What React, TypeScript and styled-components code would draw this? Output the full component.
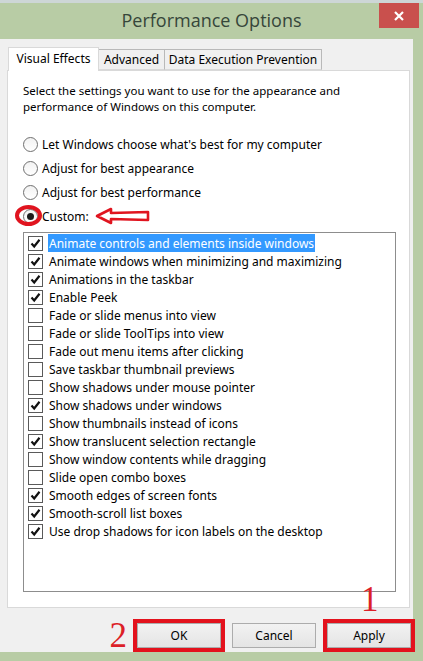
import styled, { createGlobalStyle } from 'styled-components';

const GlobalStyle = createGlobalStyle`
  html, body {
    margin: 0;
    padding: 0;
    background: #b8cca5;
  }
  body {
    font-family: 'Noto Sans', 'Open Sans', sans-serif;
    font-size: 12px;
    color: #000;
  }
`;

const Window = styled.div`
  display: flex;
  flex-direction: column;
  width: 423px;
  height: 661px;
  background: #b8cca5;
  box-sizing: border-box;
  border-top: 3px solid #cdd6d6;
`;

const TitleBar = styled.div`
  display: grid;
  grid-template-columns: 1fr auto 1fr;
  height: 36px;
`;

const Title = styled.div`
  grid-column: 2;
  align-self: center;
  margin-top: -3px;
  font-family: 'Open Sans', 'Noto Sans', sans-serif;
  font-size: 18px;
  font-weight: 400;
  color: #36463a;
`;

const CloseButton = styled.div`
  grid-column: 3;
  justify-self: end;
  align-self: start;
  display: flex;
  align-items: center;
  justify-content: center;
  width: 40px;
  height: 25px;
  margin-right: 4px;
  background: #c9504d;
`;

const Client = styled.div`
  display: flex;
  flex-direction: column;
  height: 613px;
  margin-right: 10px;
  padding: 8px 3px 0 7px;
  box-sizing: border-box;
  background: #f0f0f0;
`;

const TabStrip = styled.div`
  display: flex;
  align-items: flex-end;
  height: 23px;
  margin-left: 1px;
  position: relative;
  z-index: 1;
`;

const Tab = styled.div<{ $active?: boolean; $w: number }>`
  display: flex;
  align-items: center;
  justify-content: center;
  box-sizing: border-box;
  width: ${(p) => p.$w}px;
  height: ${(p) => (p.$active ? 24 : 21)}px;
  margin-bottom: ${(p) => (p.$active ? -1 : 0)}px;
  padding-bottom: ${(p) => (p.$active ? 2 : 0)}px;
  background: ${(p) => (p.$active ? '#fff' : '#f0f0f0')};
  border: 1px solid ${(p) => (p.$active ? '#d9d9d9' : '#b9b9b9')};
  border-bottom: ${(p) => (p.$active ? 'none' : '1px solid #d9d9d9')};
  border-left: ${(p) => (p.$active ? '1px solid #d9d9d9' : 'none')};
  font-size: 12px;
  white-space: nowrap;
`;

const Panel = styled.div`
  display: flex;
  flex-direction: column;
  height: 538px;
  box-sizing: border-box;
  padding: 12px 13px 0 15px;
  background: #fff;
  border: 1px solid #d9d9d9;
`;

const Intro = styled.p`
  margin: 0;
  line-height: 16px;
  font-size: 11.5px;
`;

const RadioGroup = styled.div`
  display: flex;
  flex-direction: column;
  margin-top: 17px;
`;

const RadioRow = styled.div`
  position: relative;
  display: flex;
  align-items: center;
  gap: 4px;
  height: 24px;
`;

const RadioCircle = styled.span<{ $checked?: boolean }>`
  display: flex;
  align-items: center;
  justify-content: center;
  width: 15px;
  height: 15px;
  box-sizing: border-box;
  border-radius: 50%;
  border: 1px solid #6f6f6f;
  background: linear-gradient(#f2f2f2, #ffffff);
  &::after {
    content: '';
    display: ${(p) => (p.$checked ? 'block' : 'none')};
    width: 7px;
    height: 7px;
    border-radius: 50%;
    background: #1b1b1b;
  }
`;

const MarkRing = styled.span`
  position: absolute;
  left: -8px;
  top: 1px;
  width: 27px;
  height: 21px;
  box-sizing: border-box;
  border: 4px solid #e0141f;
  border-radius: 50%;
`;

const ArrowMark = styled.svg`
  position: absolute;
  left: 72px;
  top: 3px;
`;

const ListBox = styled.div`
  display: flex;
  flex-direction: column;
  margin-top: 4px;
  width: 373px;
  height: 360px;
  box-sizing: border-box;
  padding-top: 1px;
  border: 1px solid #8d8d8d;
`;

const Item = styled.div`
  display: flex;
  align-items: center;
  gap: 5px;
  height: 18px;
  padding-left: 4px;
`;

const Box = styled.span`
  display: flex;
  align-items: center;
  justify-content: center;
  width: 15px;
  height: 15px;
  box-sizing: border-box;
  border: 1px solid #5a5a5a;
  background: #fff;
`;

const Label = styled.span<{ $selected?: boolean }>`
  display: flex;
  align-items: center;
  height: 18px;
  padding: 0 1px;
  white-space: nowrap;
  background: ${(p) => (p.$selected ? '#3399ff' : 'transparent')};
  color: ${(p) => (p.$selected ? '#fff' : '#000')};
`;

const Footer = styled.div`
  display: flex;
  justify-content: flex-end;
  align-items: center;
  gap: 11px;
  margin-top: 11px;
  margin-right: -1px;
`;

const ButtonWrap = styled.div`
  position: relative;
`;

const Button = styled.button<{ $marked?: boolean }>`
  width: 84px;
  height: 25px;
  padding: 0;
  border: 1px solid #acacac;
  background: linear-gradient(#f2f2f2, #e4e4e4);
  font-family: 'Noto Sans', 'Open Sans', sans-serif;
  font-size: 12px;
  color: #000;
  outline: ${(p) => (p.$marked ? '4px solid #e3121d' : 'none')};
`;

const StepNumber = styled.span`
  font-family: 'Liberation Serif', serif;
  font-size: 35px;
  line-height: 30px;
  color: #dc1f28;
`;

const StepAbove = styled(StepNumber)`
  position: absolute;
  left: 34px;
  top: -38px;
`;

const StepBefore = styled(StepNumber)`
  margin-right: -1px;
  margin-top: 2px;
`;

const effects: [string, boolean][] = [
  ['Animate controls and elements inside windows', true],
  ['Animate windows when minimizing and maximizing', true],
  ['Animations in the taskbar', true],
  ['Enable Peek', true],
  ['Fade or slide menus into view', false],
  ['Fade or slide ToolTips into view', false],
  ['Fade out menu items after clicking', false],
  ['Save taskbar thumbnail previews', false],
  ['Show shadows under mouse pointer', false],
  ['Show shadows under windows', true],
  ['Show thumbnails instead of icons', false],
  ['Show translucent selection rectangle', true],
  ['Show window contents while dragging', false],
  ['Slide open combo boxes', false],
  ['Smooth edges of screen fonts', true],
  ['Smooth-scroll list boxes', true],
  ['Use drop shadows for icon labels on the desktop', true],
];

const radios = [
  "Let Windows choose what's best for my computer",
  'Adjust for best appearance',
  'Adjust for best performance',
  'Custom:',
];

const Check = () => (
  <svg width="11" height="11" viewBox="0 0 11 11">
    <path d="M1.5 5.5 L4.2 8.5 L9.5 1.8" fill="none" stroke="#111" strokeWidth="2.2" />
  </svg>
);

export default function App() {
  return (
    <>
      <GlobalStyle />
      <Window>
        <TitleBar>
          <Title>Performance Options</Title>
          <CloseButton>
            <svg width="10" height="10" viewBox="0 0 10 10">
              <path d="M1 1 L9 9 M9 1 L1 9" stroke="#fff" strokeWidth="2.2" />
            </svg>
          </CloseButton>
        </TitleBar>
        <Client>
          <TabStrip>
            <Tab $active $w={91}>Visual Effects</Tab>
            <Tab $w={66}>Advanced</Tab>
            <Tab $w={157}>Data Execution Prevention</Tab>
          </TabStrip>
          <Panel>
            <Intro>
              Select the settings you want to use for the appearance and
              <br />
              performance of Windows on this computer.
            </Intro>
            <RadioGroup>
              {radios.map((r, i) => {
                const custom = i === radios.length - 1;
                return (
                  <RadioRow key={r}>
                    <RadioCircle $checked={custom} />
                    <span>{r}</span>
                    {custom && (
                      <>
                        <MarkRing />
                        <ArrowMark width="56" height="18" viewBox="0 0 56 18">
                          <path
                            d="M2 9 L16 2 L16 6 L53 5 L53 13 L16 12 L16 16 Z"
                            fill="#fff"
                            stroke="#e0141f"
                            strokeWidth="2.6"
                            strokeLinejoin="round"
                          />
                        </ArrowMark>
                      </>
                    )}
                  </RadioRow>
                );
              })}
            </RadioGroup>
            <ListBox>
              {effects.map(([label, on], i) => (
                <Item key={label}>
                  <Box>{on && <Check />}</Box>
                  <Label $selected={i === 0}>{label}</Label>
                </Item>
              ))}
            </ListBox>
          </Panel>
          <Footer>
            <StepBefore>2</StepBefore>
            <Button $marked>OK</Button>
            <Button>Cancel</Button>
            <ButtonWrap>
              <StepAbove>1</StepAbove>
              <Button $marked>Apply</Button>
            </ButtonWrap>
          </Footer>
        </Client>
      </Window>
    </>
  );
}
